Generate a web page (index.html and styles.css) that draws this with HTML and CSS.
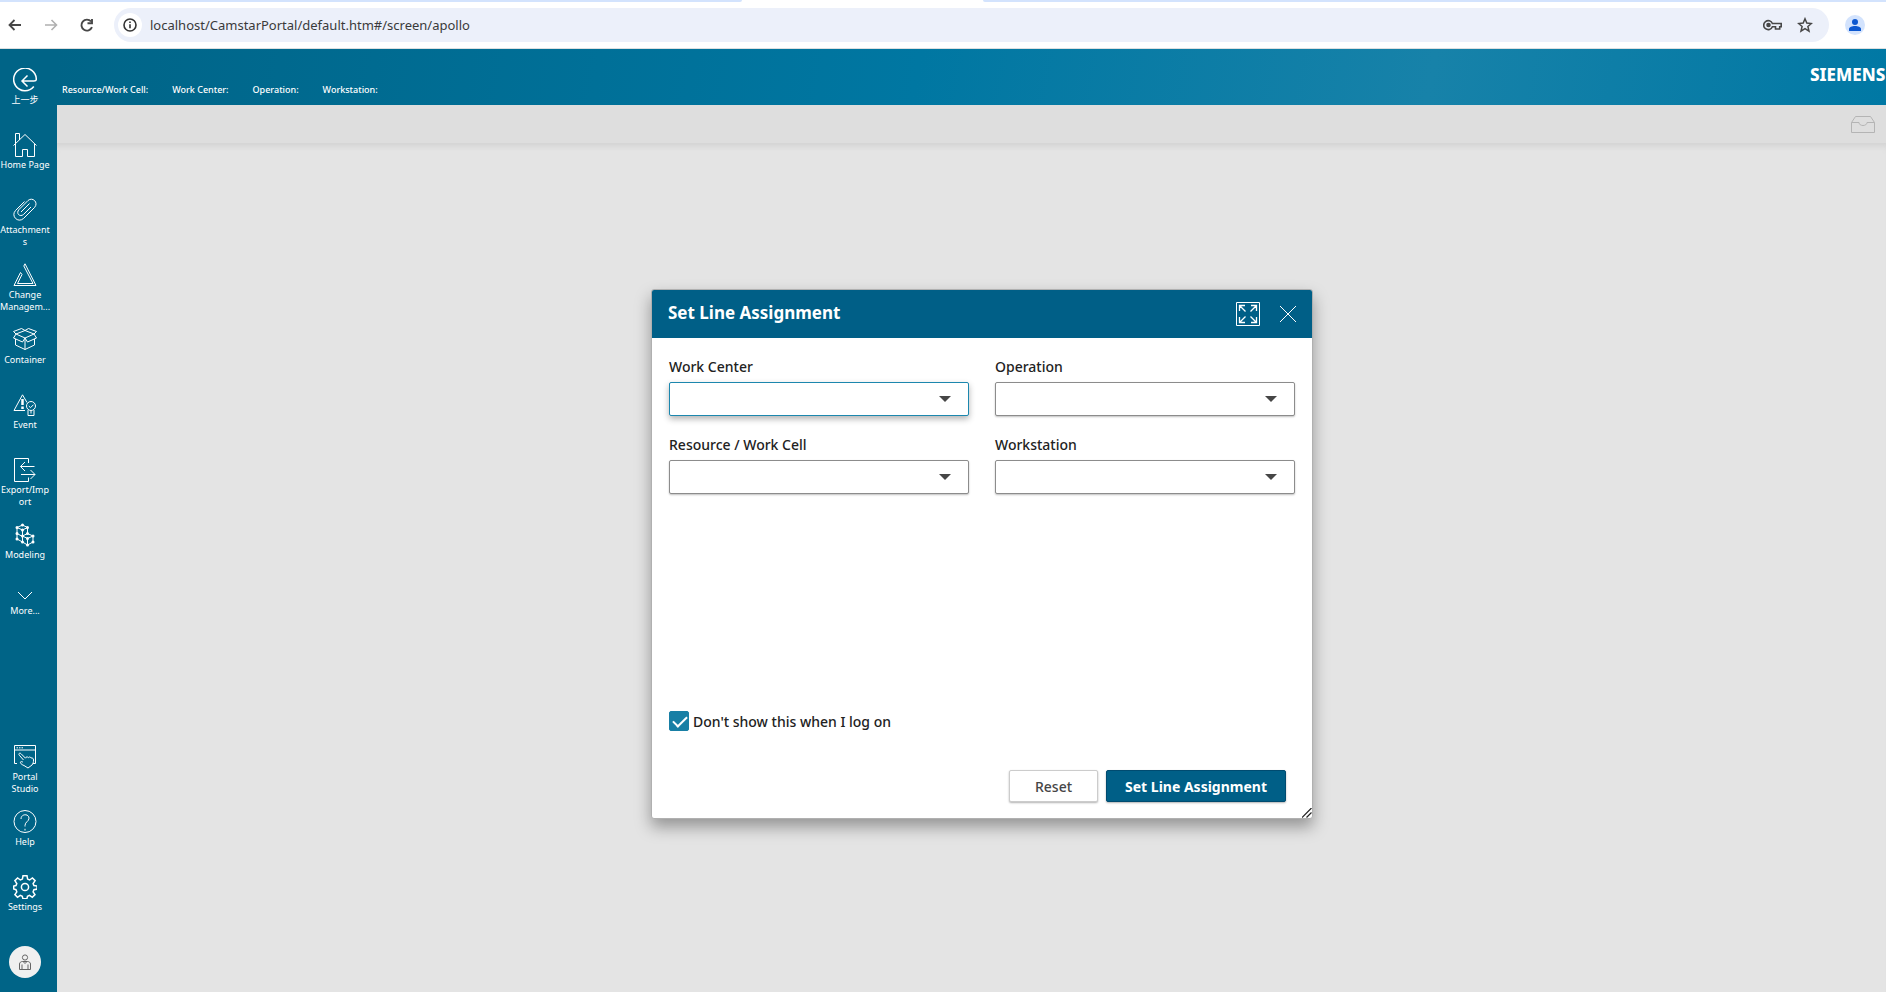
FILE: index.html
```html
<!DOCTYPE html>
<html lang="en">

<head>
    <meta charset="UTF-8">
    <title>Set Line Assignment</title>
    <link rel="stylesheet" href="styles.css">
</head>

<body>
    <div class="browser">
        <div class="tab-strip">
            <div class="tabs-before"></div>
            <div class="tab-active"></div>
            <div class="tabs-after"></div>
        </div>
        <div class="toolbar">
            <button class="nav-button" aria-label="Back">
                <svg width="16" height="16" viewBox="0 0 16 16" fill="none" stroke="#474747" stroke-width="1.800"><path d="M15 8H3.500M8.500 3L3.500 8l5 5"/></svg>
            </button>
            <button class="nav-button" aria-label="Forward" disabled>
                <svg width="16" height="16" viewBox="0 0 16 16" fill="none" stroke="#b0b0b0" stroke-width="1.600"><path d="M3 8h11.500M9.500 3l5 5-5 5"/></svg>
            </button>
            <button class="nav-button" aria-label="Reload">
                <svg width="16" height="16" viewBox="0 0 16 16" fill="none" stroke="#474747" stroke-width="1.900"><path d="M14 10.200A5.500 5.500 0 1 1 13.100 4.500"/><path d="M14 2v4.300H9.500"/></svg>
            </button>
            <div class="address-bar">
                <button class="site-info" aria-label="View site information">
                    <svg width="14" height="14" viewBox="0 0 14 14" fill="none" stroke="#333" stroke-width="1.600"><circle cx="7" cy="7" r="6"/><path d="M7 6.200v4M7 3.500v1.600"/></svg>
                </button>
                <input class="address" type="text" aria-label="Address" value="localhost/CamstarPortal/default.htm#/screen/apollo">
                <button class="bar-button" aria-label="Passwords">
                    <svg width="20" height="12" viewBox="0 0 20 12" fill="none" stroke="#474747" stroke-width="1.600"><path d="M9.400 4.500A4.500 4.500 0 1 0 9.400 7.800H12.500V10h4.200V7.800H18.200V4.500z"/><circle cx="5.500" cy="6" r="1.500" fill="#474747"/></svg>
                </button>
                <button class="bar-button" aria-label="Bookmark this page">
                    <svg width="16" height="16" viewBox="0 0 16 16" fill="none" stroke="#474747" stroke-width="1.500"><path d="M8 1.800l1.800 4.300 4.600.4-3.500 3 1.100 4.600L8 11.700l-4 2.400 1.100-4.600-3.500-3 4.600-.4z"/></svg>
                </button>
            </div>
            <button class="profile" aria-label="Profile">
                <svg width="12" height="12" viewBox="0 0 12 12" fill="#0b57d0"><circle cx="6" cy="3" r="3"/><path d="M0 12v-2c0-2 3-3 6-3s6 1 6 3v2z"/></svg>
            </button>
        </div>
    </div>

    <div class="app">
        <nav class="sidebar">
            <a class="nav-item" href="#">
                <svg class="icon thick" viewBox="0 0 24 24"><path d="M20.800 18.500A11.300 11.300 0 1 1 23.300 11.500c0 1.200-.8 1.500-2.300 1.500H9.500M14.500 7.500L9 13l5.500 5.500"/></svg>
                <span>上一步</span>
            </a>
            <a class="nav-item" href="#">
                <svg class="icon" viewBox="0 0 24 24"><path d="M.5 12.500L12 1.500l11.500 11M2.500 11V.5h4V7M2.500 11v12.500h7v-7h5v7h7V11"/></svg>
                <span>Home Page</span>
            </a>
            <a class="nav-item" href="#">
                <svg class="icon" viewBox="0 0 24 24"><path d="M11.500 3.500L2.500 12.500C-2.500 18 5 25.500 10.500 20.500L21.500 9.500C26 4.500 19.500-1.500 15 2.500L6 11.500C2.500 15.500 7 19.500 10.500 16.500L18 9M16.500 5.500L8 14"/></svg>
                <span>Attachments</span>
            </a>
            <a class="nav-item" href="#">
                <svg class="icon" viewBox="0 0 24 24"><path d="M7.500 9.500L1 22.500h22L12 .8 10.800 3 20 20.500H4.500L9 11.500z"/></svg>
                <span class="clipped">Change Managem...</span>
            </a>
            <a class="nav-item" href="#">
                <svg class="icon" viewBox="0 0 24 24"><path d="M3 6L12 2.500 21 6l-9 4zM12 10V21.500M3 6L.5 10 9.500 14l2.500-4 2.500 4 9-4L21 6M3 6L.5 3.500 8.500.5 12 2.500 15.500.5l8 3L21 6M2.500 11v6l9.500 4.500 9.500-4.500v-6"/></svg>
                <span>Container</span>
            </a>
            <a class="nav-item" href="#">
                <svg class="icon" viewBox="0 0 24 24"><path d="M12 17.500H1L9.500 1.800 14 9.500"/><path d="M9.500 6v6M9.500 13.500v2.500" stroke-width="2.500"/><circle cx="18" cy="13" r="4.500"/><path d="M15.800 13l1.700 1.700 3-3M15 17v5.500h6V17M18 17.500v3"/></svg>
                <span>Event</span>
            </a>
            <a class="nav-item" href="#">
                <svg class="icon" viewBox="0 0 24 24"><path d="M15.500 5V.5h-14v23h14v-4M21.500 8.500H7.500M12 4L7.500 8.500 12 13M8 16.500h14M17.500 12l4.500 4.500-4.500 4.500"/></svg>
                <span>Export/Import</span>
            </a>
            <a class="nav-item" href="#">
                <svg class="icon" viewBox="0 0 24 24"><path d="M4 4.500L9.500 2 14.500 4.500v6M4 4.500L9.500 7l5-2.500M4 4.500v11.500l5.500 3V7M4 10.500l5.500 3M9.500 13l5-2.500L20 13v6l-5.500 3-5-3M9.500 13l5 2.500L20 13M14.500 15.500V22"/><path class="dots" d="M4 4.500h0M9.500 2h0M14.500 4.500h0M9.500 7h0M4 10.500h0M4 16h0M9.500 13h0M9.500 19h0M14.500 10.500h0M20 13h0M14.500 15.500h0M14.500 22h0M20 19h0"/></svg>
                <span>Modeling</span>
            </a>
            <a class="nav-item more" href="#">
                <svg class="icon" viewBox="0 0 24 15"><path d="M5 4l7 7 7-7"/></svg>
                <span>More...</span>
            </a>
            <div class="sidebar-bottom">
                <a class="nav-item" href="#">
                    <svg class="icon" viewBox="0 0 24 24"><path d="M4 18.500H1.500v-18h21v18H20M1.500 5h21M3.500 2.800h1.500M6 2.800h1.500M8.500 2.800H10"/><path d="M10.500 15L6.300 10.200C5 8.500 7 7.500 8 8.700l4.500 4.500c.5-1.500 2-1.700 2.800-.5.600-1 2.200-1 2.700.3 1.500-.5 2.500.5 2.500 2 0 2.500-.5 3.500-1.500 5L15 23l-4-2.500c-1.500-.5-3-1.500-3.500-2.500-.5-1.500 1-1.800 2.500-.8"/></svg>
                    <span>Portal Studio</span>
                </a>
                <a class="nav-item" href="#">
                    <svg class="icon" viewBox="0 0 24 24"><circle cx="12" cy="11.500" r="11"/><path d="M8 9c0-5.500 8-5.500 8-.8 0 3.300-4 3.600-4 7.300v1M12 18.800v1.700"/></svg>
                    <span>Help</span>
                </a>
                <a class="nav-item" href="#">
                    <svg class="icon thick" viewBox="0 0 24 24"><path d="M10 .8h4l.6 3.300 2 .9 2.800-2 2.700 2.700-2 2.800.8 2 3.200.6v3l-3.200.6-.8 2.100 1.900 2.800-2.700 2.700-2.800-1.900-2 .9-.6 2.400h-4l-.6-2.400-2-.9-2.800 1.900L1.900 19.600l1.900-2.800-.8-2.100L.7 14v-3L3 10.500l.8-2L1.900 5.700 4.600 3l2.800 2 2-.9z"/><circle cx="12" cy="12" r="3.600"/></svg>
                    <span>Settings</span>
                </a>
                <button class="avatar" aria-label="User">
                    <svg width="12" height="16" viewBox="0 0 12 16" fill="none" stroke="#666"><circle cx="6" cy="3.500" r="2.600"/><path d="M.5 15.500V10C.5 8.500 2 7.500 3.500 7.500h5c1.500 0 3 1 3 2.500v5.500zM3 10.500v5M9 10.500v5M4 7.500l2 2 2-2"/></svg>
                </button>
            </div>
        </nav>

        <div class="main">
            <header class="header">
                <div class="line-info">
                    <span>Resource/Work Cell:</span>
                    <span>Work Center:</span>
                    <span>Operation:</span>
                    <span>Workstation:</span>
                </div>
                <div class="logo">SIEMENS</div>
            </header>
            <div class="page-bar">
                <button class="inbox" aria-label="Inbox">
                    <svg width="24" height="17" viewBox="0 0 24 17" fill="none" stroke="#b4b4b4"><path d="M.5 6.500L4.500.5h15l4 6v10H.5zM.5 6.500h7.500c0 4 8 4 8 0h7.500"/></svg>
                </button>
            </div>
            <div class="content">
                <form class="dialog" role="dialog" aria-labelledby="dialog-title">
                    <div class="dialog-header">
                        <h1 id="dialog-title">Set Line Assignment</h1>
                        <button type="button" class="dialog-icon" aria-label="Maximize">
                            <svg width="24" height="24" viewBox="0 0 24 24" fill="none" stroke="#fff"><path d="M.5.5h23v23H.5z"/><path stroke-width="1.300" d="M3.500 9V3.500H9M3.500 3.500l6 6M15 3.500h5.500V9M20.500 3.500l-6 6M3.500 15v5.500H9M3.500 20.500l6-6M15 20.500h5.500V15M20.500 20.500l-6-6"/></svg>
                        </button>
                        <button type="button" class="dialog-icon" aria-label="Close">
                            <svg width="16" height="16" viewBox="0 0 16 16" fill="none" stroke="#fff"><path d="M0 0l16 16M16 0L0 16"/></svg>
                        </button>
                    </div>
                    <div class="dialog-body">
                        <div class="fields">
                            <div class="field">
                                <label for="work-center">Work Center</label>
                                <div class="select focused"><select id="work-center"><option></option></select></div>
                            </div>
                            <div class="field">
                                <label for="operation">Operation</label>
                                <div class="select"><select id="operation"><option></option></select></div>
                            </div>
                            <div class="field">
                                <label for="work-cell">Resource / Work Cell</label>
                                <div class="select"><select id="work-cell"><option></option></select></div>
                            </div>
                            <div class="field">
                                <label for="workstation">Workstation</label>
                                <div class="select"><select id="workstation"><option></option></select></div>
                            </div>
                        </div>
                        <div class="remember">
                            <input type="checkbox" id="dont-show" checked>
                            <label for="dont-show">Don't show this when I log on</label>
                        </div>
                    </div>
                    <div class="dialog-footer">
                        <button type="reset" class="button">Reset</button>
                        <button type="button" class="button primary">Set Line Assignment</button>
                    </div>
                    <svg class="resize-handle" width="10" height="10" viewBox="0 0 10 10" stroke="#222" stroke-width="1.200"><path d="M0 9.500L9.500 0M4.500 9.500l5-5"/></svg>
                </form>
            </div>
        </div>
    </div>
</body>
</html>
```

FILE: styles.css
```css
* {
    box-sizing: border-box;
}

body {
    margin: 0;
    height: 100vh;
    display: flex;
    flex-direction: column;
    overflow: hidden;
    font-family: "Noto Sans", "Noto Sans CJK SC", sans-serif;
    color: #222;
}

button {
    display: flex;
    align-items: center;
    justify-content: center;
    padding: 0;
    border: none;
    background: none;
    font-family: inherit;
    cursor: pointer;
}

svg {
    flex: none;
}

/* browser bar */
.browser {
    background-color: #fff;
    border-bottom: 1px solid #dcdfe0;
}

.tab-strip {
    display: grid;
    grid-template-columns: 37fr 12fr 45fr;
    height: 2px;
}

.tabs-before,
.tabs-after {
    background-color: #d3e3fd;
}

.tabs-before {
    border-bottom-right-radius: 4px;
}

.tabs-after {
    border-bottom-left-radius: 4px;
}

.toolbar {
    display: flex;
    align-items: center;
    height: 46px;
    padding: 0 21px 0 6px;
}

.nav-button {
    width: 16px;
    height: 34px;
    margin-right: 20px;
}

.address-bar {
    flex: 1;
    display: flex;
    align-items: center;
    height: 34px;
    margin-right: 16px;
    padding: 0 16px 0 4px;
    border-radius: 17px;
    background-color: #ecf0fa;
}

.site-info {
    width: 24px;
    height: 24px;
    border-radius: 50%;
    background-color: #fff;
}

.address {
    flex: 1;
    padding: 0 8px;
    border: none;
    outline: none;
    background: none;
    font-family: "Noto Sans", sans-serif;
    font-size: 13px;
    color: #3a3a3a;
}

.bar-button {
    margin-left: 14px;
}

.profile {
    width: 20px;
    height: 20px;
    border-radius: 50%;
    background-color: #d3e3fd;
}

/* application */
.app {
    flex: 1;
    display: flex;
    min-height: 0;
}

.sidebar {
    width: 57px;
    display: flex;
    flex-direction: column;
    padding: 19px 7px 14px 0;
    background-color: #006487;
}

.nav-item {
    flex: none;
    display: flex;
    flex-direction: column;
    align-items: center;
    gap: 2px;
    height: 65px;
    font-size: 9px;
    line-height: 12px;
    text-align: center;
    text-decoration: none;
    color: #fff;
}

.nav-item span {
    max-width: 100%;
    overflow-wrap: anywhere;
}

.nav-item .clipped {
    overflow-wrap: normal;
}

.icon {
    width: 24px;
    height: 24px;
    fill: none;
    stroke: #fff;
}

.icon .dots {
    stroke-width: 3;
    stroke-linecap: round;
}

.thick {
    stroke-width: 1.5;
}

.more .icon {
    height: 15px;
}

.sidebar-bottom {
    display: flex;
    flex-direction: column;
    align-items: center;
    margin-top: auto;
}

.avatar {
    width: 32px;
    height: 32px;
    margin-top: 6px;
    border-radius: 50%;
    background-color: #f0f0f0;
}

.main {
    flex: 1;
    display: flex;
    flex-direction: column;
    min-width: 0;
}

.header {
    display: flex;
    justify-content: space-between;
    height: 56px;
    background: linear-gradient(100deg, #006487 0%, #0077a2 47%, #1782a9 75%, #0078a4 100%);
    color: #fff;
}

.line-info {
    display: flex;
    gap: 24px;
    padding: 34px 0 0 5px;
    font-size: 9px;
    font-weight: 500;
    line-height: 14px;
}

.logo {
    width: 76px;
    padding-top: 14px;
    overflow: hidden;
    font-size: 17px;
    font-weight: 800;
    line-height: 24px;
}

.page-bar {
    display: flex;
    align-items: center;
    justify-content: flex-end;
    height: 38px;
    padding-right: 11px;
    background-color: #dedede;
}

.content {
    flex: 1;
    display: flex;
    align-items: center;
    justify-content: center;
    padding: 0 0 27px 21px;
    background-color: #e4e4e4;
    box-shadow: inset 0 7px 6px -4px #d2d2d2;
}

/* dialog */
.dialog {
    position: relative;
    display: flex;
    flex-direction: column;
    width: 662px;
    min-height: 530px;
    border: 1px solid #b0b0b0;
    border-radius: 3px;
    background-color: #fff;
    box-shadow: 0 8px 16px rgba(0, 0, 0, 0.35);
}

.dialog-header {
    display: flex;
    align-items: center;
    gap: 20px;
    height: 48px;
    padding: 0 16px;
    border-radius: 2px 2px 0 0;
    background-color: #005f87;
}

.dialog-header h1 {
    flex: 1;
    margin: 0;
    padding-bottom: 2px;
    font-size: 17px;
    font-weight: 700;
    line-height: 24px;
    color: #fff;
}

.dialog-body {
    flex: 1;
    display: flex;
    flex-direction: column;
    justify-content: space-between;
    padding: 17px;
}

.fields {
    display: grid;
    grid-template-columns: 1fr 1fr;
    gap: 17px 26px;
}

.field {
    display: flex;
    flex-direction: column;
    gap: 3px;
    font-size: 14px;
    font-weight: 500;
    line-height: 24px;
}

.select {
    position: relative;
}

.select select {
    display: block;
    width: 100%;
    height: 34px;
    padding: 0 40px 0 8px;
    appearance: none;
    border: 1px solid #8c8c8c;
    border-radius: 2px;
    outline: none;
    background-color: #fff;
    box-shadow: 0 1px 2px rgba(0, 0, 0, 0.25);
}

.select::after {
    content: "";
    position: absolute;
    top: 14px;
    right: 18px;
    border: 6px solid transparent;
    border-top-color: #464646;
    border-bottom: none;
    pointer-events: none;
}

.focused select {
    border-color: #1c87ae;
    box-shadow: 0 3px 6px rgba(0, 0, 0, 0.3);
}

.remember {
    display: flex;
    align-items: center;
    gap: 4px;
    margin-bottom: 19px;
    font-size: 14px;
    font-weight: 500;
    line-height: 24px;
}

.remember label {
    padding-top: 2px;
}

.remember input {
    position: relative;
    width: 20px;
    height: 20px;
    margin: 0;
    appearance: none;
    border: 1px solid #187fa5;
    border-radius: 2px;
}

.remember input:checked {
    background-color: #187fa5;
}

.remember input:checked::after {
    content: "";
    position: absolute;
    top: 1px;
    left: 6px;
    width: 6px;
    height: 12px;
    border: solid #fff;
    border-width: 0 2px 2px 0;
    transform: rotate(45deg);
}

.dialog-footer {
    display: flex;
    justify-content: flex-end;
    gap: 8px;
    padding: 0 26px 16px;
}

.button {
    height: 32px;
    padding: 0 25px;
    border: 1px solid #ccc;
    border-radius: 2px;
    background-color: #fff;
    box-shadow: 0 1px 2px rgba(0, 0, 0, 0.3);
    font-size: 14px;
    font-weight: 500;
    color: #464646;
}

.primary {
    padding: 0 18px;
    border-color: #004b70;
    background-color: #005f87;
    font-weight: 700;
    color: #fff;
}

.resize-handle {
    position: absolute;
    right: 0;
    bottom: 0;
}
```
